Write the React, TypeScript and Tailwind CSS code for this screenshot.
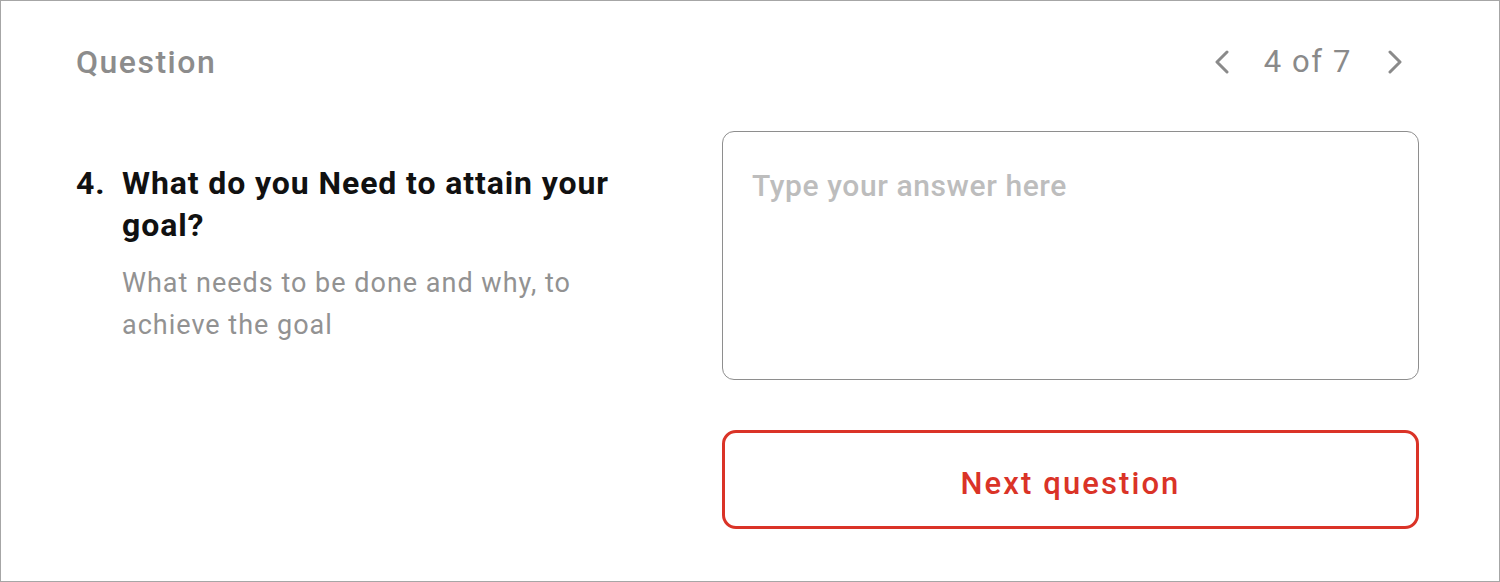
import React, { useState } from 'react';

const Chevron: React.FC<{ dir: 'left' | 'right' }> = ({ dir }) => (
    <svg width="16" height="24" viewBox="0 0 16 24" fill="none" className="block">
        <polyline
            points={dir === 'left' ? '13,2 3,12 13,22' : '3,2 13,12 3,22'}
            stroke="#8a8a8a"
            strokeWidth="3"
            strokeLinecap="round"
            strokeLinejoin="round"
        />
    </svg>
);

export default function App() {
    const [answer, setAnswer] = useState('');
    const current = 4;
    const total = 7;

    return (
        <div className="w-[1500px] h-[582px] bg-white border border-[#a6a6a6] pl-[75px] pr-[80px] pt-[41px] font-['Roboto',sans-serif]">
            <div className="flex items-center justify-between h-[40px] pr-[16px]">
                <span className="text-[32px] leading-[40px] font-medium tracking-[1.5px] text-[#8c8c8c]">Question</span>
                <div className="flex items-center">
                    <button type="button" className="block"><Chevron dir="left" /></button>
                    <span className="ml-[34px] mr-[35px] text-[31px] leading-[40px] tracking-[1.6px] text-[#8a8a8a]">{current} of {total}</span>
                    <button type="button" className="block"><Chevron dir="right" /></button>
                </div>
            </div>

            <div className="flex justify-between mt-[49px]">
                <div className="w-[580px] pt-[31px]">
                    <div className="flex">
                        <span className="w-[46px] shrink-0 text-[32px] leading-[42px] font-bold tracking-[0.9px] text-[#111]">{current}.</span>
                        <div className="w-[520px]">
                            <h2 className="text-[32px] leading-[42px] font-bold tracking-[0.9px] text-[#111]">What do you Need to attain your goal?</h2>
                            <p className="mt-[16px] text-[27px] leading-[42px] tracking-[1px] text-[#929292]">What needs to be done and why, to achieve the goal</p>
                        </div>
                    </div>
                </div>

                <div className="w-[697px] flex flex-col">
                    <textarea
                        value={answer}
                        onChange={e => setAnswer(e.target.value)}
                        placeholder="Type your answer here"
                        className="h-[249px] w-full resize-none rounded-[12px] border-[1.5px] border-[#8e8e8e] px-[29px] pt-[36px] text-[30px] leading-[36px] font-medium tracking-[0.6px] text-[#333] placeholder:text-[#bdbdbd] outline-none"
                    />
                    <button
                        type="button"
                        className="mt-[50px] h-[99px] w-full pt-[10px] rounded-[14px] border-[3px] border-[#da3327] text-[31px] font-medium tracking-[2.1px] text-[#da3327]"
                    >
                        Next question
                    </button>
                </div>
            </div>
        </div>
    );
}
